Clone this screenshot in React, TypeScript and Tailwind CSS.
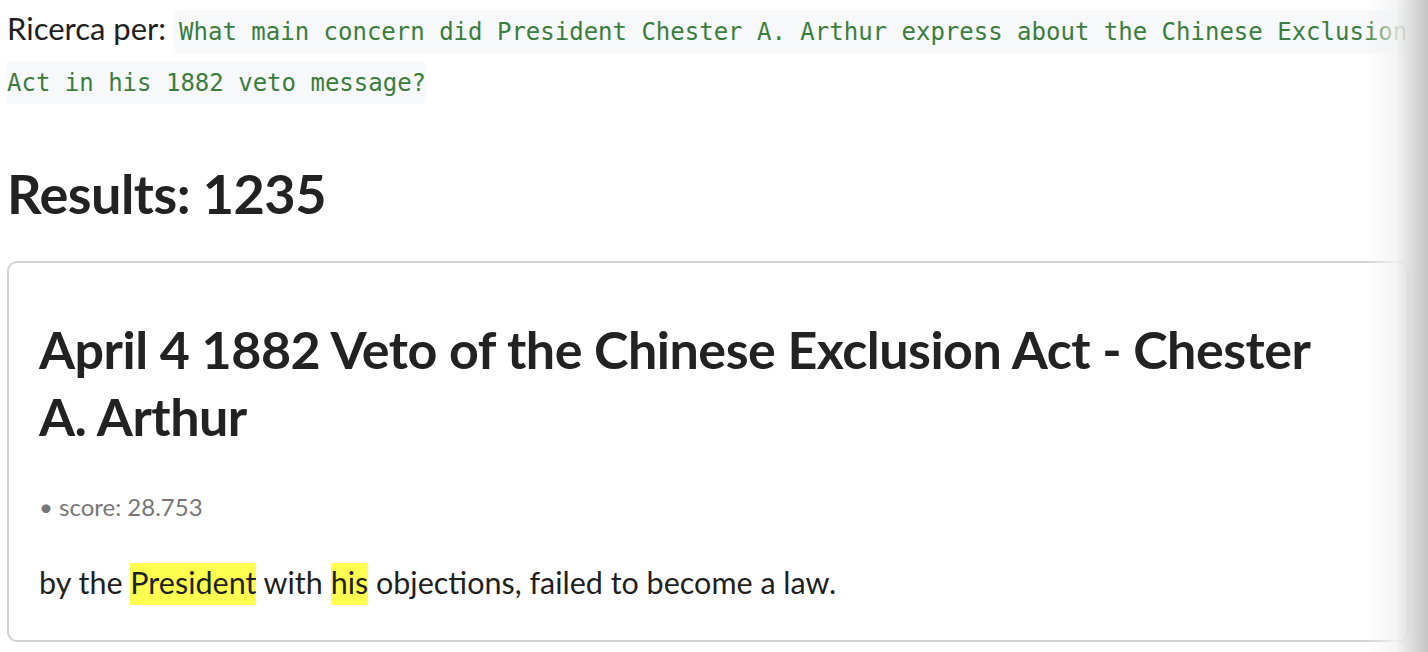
import React from 'react';

const query =
  'What main concern did President Chester A. Arthur express about the Chinese Exclusion Act in his 1882 veto message?';

const App: React.FC = () => {
  return (
    <div className="relative min-h-[652px] w-[1428px] overflow-hidden bg-white font-['Lato',sans-serif] text-[#1f1f1f]">
      <div className="pl-[7px]">
        {/* Query line */}
        <p className="pr-[14px] pt-[3px] text-[31px] leading-[51px]">
          <span>Ricerca per:</span>{' '}
          <code className="rounded-md bg-[#f6f8fa] pb-[7px] pl-[5px] pt-[8px] font-['DejaVu_Sans_Mono',monospace] text-[24px] leading-none text-[#3b7d3f]">
            {query}
          </code>
        </p>

        <h1 className="mt-[54px] text-[54px] font-bold leading-[70px] tracking-[-0.5px] text-[#222]">
          Results: 1235
        </h1>

        {/* Result card */}
        <div className="mr-[19px] mt-[32px] rounded-[10px] border-2 border-[#d4d4d4] pb-[37px] pl-[30px] pr-[40px] pt-[53px]">
          <h2 className="text-[52px] font-bold leading-[67px] tracking-[-0.5px] text-[#222]">
            April 4 1882 Veto of the Chinese Exclusion Act - Chester A. Arthur
          </h2>
          <div className="mt-[41px] text-[24px] leading-[32px] text-[#777]">• score: 28.753</div>
          <p className="mt-[38px] text-[30.5px] leading-[42px]">
            by the <mark className="bg-[#ffff4f] pb-[5px] pt-[1px] text-[#1f1f1f]">President</mark> with{' '}
            <mark className="bg-[#ffff4f] pb-[5px] pt-[1px] text-[#1f1f1f]">his</mark> objections, failed to become a law.
          </p>
        </div>
      </div>

      {/* right edge scroll shadow */}
      <div className="pointer-events-none absolute right-0 top-0 h-full w-[64px] bg-gradient-to-r from-white/0 via-[#f2f2f2]/80 to-[#c4c4c4]" />
    </div>
  );
};

export default App;
